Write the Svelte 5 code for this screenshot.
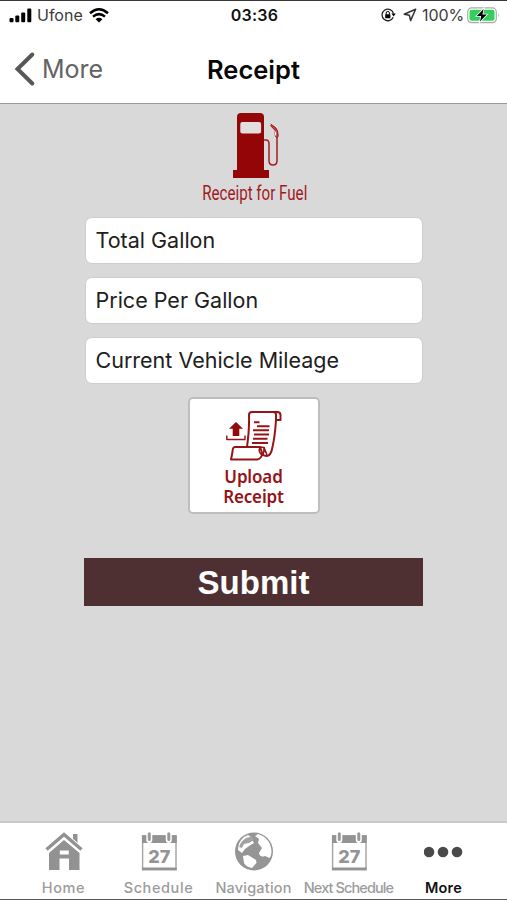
<script lang="ts">
	const fields = [
		{ name: 'gallons', label: 'Total Gallon' },
		{ name: 'price', label: 'Price Per Gallon' },
		{ name: 'mileage', label: 'Current Vehicle Mileage' }
	];

	const tabs = [
		{ id: 'home', label: 'Home', icon: 'home' },
		{ id: 'schedule', label: 'Schedule', icon: 'calendar' },
		{ id: 'navigation', label: 'Navigation', icon: 'globe' },
		{ id: 'next', label: 'Next Schedule', icon: 'calendar' },
		{ id: 'more', label: 'More', icon: 'dots' }
	];

	let active = $state('more');
</script>

<div class="screen">
	<div class="status">
		<div class="carrier">
			<svg width="24" height="15" viewBox="0 0 24 15">
				<rect x="0.5" y="10" width="4" height="4.2" rx="1" />
				<rect x="6.3" y="7.6" width="4" height="6.6" rx="1" />
				<rect x="12.2" y="4.4" width="4" height="9.8" rx="1" />
				<rect x="18.3" y="0.5" width="4" height="13.7" rx="1" />
			</svg>
			<span class="network">Ufone</span>
			<svg width="20" height="15" viewBox="0 0 20 15">
				<path d="M1 5.2Q10 -2.6 19 5.2M4 8.6Q10 3.7 16 8.6" fill="none" stroke="#000" stroke-width="2.5" />
				<path d="M6.6 11.2Q10 8.3 13.4 11.2L10 14.4Z" />
			</svg>
		</div>
		<span class="time">03:36</span>
		<div class="battery">
			<svg class="lock" width="15" height="14" viewBox="0 0 15 14">
				<path d="M12.2 9.2A5.8 5.8 0 1 1 12.5 5.5" fill="none" stroke="#222" stroke-width="1.3" />
				<path d="M10.4 5.5h4.4l-2.2 3z" />
				<rect x="4.2" y="6.3" width="5.2" height="4" rx=".5" />
				<path d="M5.2 6.5V5a1.6 1.6 0 0 1 3.2 0v1.5" fill="none" stroke="#000" />
			</svg>
			<svg class="arrow" width="14" height="14" viewBox="0 0 14 14">
				<path d="M12.6 1.3L1.2 6.3L6.4 7.3L7.6 12.6Z" fill="none" stroke="#333" stroke-width="1.5" stroke-linejoin="round" />
			</svg>
			<span class="percent">100%</span>
			<svg width="33" height="17" viewBox="0 0 33 17">
				<rect x=".7" y=".9" width="28.6" height="14.8" rx="4" fill="#fff" stroke="#aaa" stroke-width="1.2" />
				<rect x="2.5" y="2.8" width="25" height="11" rx="2" fill="#32cf5c" />
				<path d="M31 6q1.5 2.2 0 4.6z" fill="#999" />
				<path d="M16.6 2L9.8 9h4.4l-1.2 5.6L19.8 7.6h-4.4z" fill="#000" stroke="#fff" stroke-width="1.6" paint-order="stroke" />
			</svg>
		</div>
	</div>

	<header>
		<button class="back">
			<svg width="22" height="36" viewBox="0 0 22 36">
				<path d="M18.3 3.5L3.5 18L18.3 32.5" fill="none" stroke="#575757" stroke-width="4" stroke-linecap="round" />
			</svg>
			<span>More</span>
		</button>
		<h1>Receipt</h1>
	</header>

	<main>
		<svg class="pump" width="50" height="66" viewBox="0 0 50 66">
			<path fill="#940508" d="M5 57V4Q5 0 9 0H28Q32 0 32 4V57H37V65H1V57Z" />
			<rect x="8.3" y="9" width="20.8" height="11.5" rx="2" fill="#e1dede" />
			<path d="M32 27H34Q37 27 37 31V47.5Q37 52 41 52Q45 52 45 47.5V24" fill="none" stroke="#a31d20" stroke-width="1.5" />
			<path d="M38.8 11.2L43.5 14.5Q46.3 17 46.2 23.5Q44 26 43.2 22V17.5L38.5 12.6" fill="#c04b4d" stroke="#9c1215" />
			<path d="M43.6 18.5v4" stroke="#eee" stroke-width="1.2" />
		</svg>
		<h2>Receipt for Fuel</h2>

		<form>
			{#each fields as field}
				<input type="text" name={field.name} placeholder={field.label} />
			{/each}

			<button type="button" class="upload">
				<svg width="56" height="52" viewBox="0 0 56 52" fill="none" stroke="#941417" stroke-width="2" stroke-linejoin="round">
					<path d="M21 36Q23.5 18 23 4Q23 1 26 1H51Q54.5 1 54.5 4V9H50V4Q50 1 47.5 1M50 9Q49 25 46.5 36Q45 45 40.5 45Q36 45 35.5 40L34 36H9Q6.5 36 6.5 41L5 48.5H31Q34.5 48.5 36.5 43" />
					<path d="M34 36Q31.8 42 36.5 44Q38.5 41 38 36.5L34 36M38 36.5L41 44" stroke-width="1.6" />
					<path d="M28 11.2H33.5M31 15.2H43.5M27 19.3H43M28 23.5H43M27 27.8H41.5M26 32H42" />
					<path d="M10 11L17 17.7H13.3V25H6.7V17.7H3Z" fill="#940b0e" stroke="none" />
					<path d="M.8 24.5V28.5H19V24.5" stroke-width="1.4" />
				</svg>
				<span>Upload<br />Receipt</span>
			</button>

			<button type="button" class="submit">Submit</button>
		</form>
	</main>

	<nav>
		{#each tabs as tab}
			<button class={['tab', tab.id]} class:active={active === tab.id} onclick={() => (active = tab.id)}>
				{#if tab.icon === 'home'}
					<svg width="38" height="40" viewBox="0 0 38 40" fill="#929292">
						<path d="M28 3h4.5v11l-4.5-4z" />
						<path d="M4 22L19 9L34.5 22V39H24V27.5H14.5V39H4Z" />
						<path d="M14.8 19.5h9v4h-9z" fill="#fff" />
						<path d="M2 18.8L19 3.8L36 18.8" fill="none" stroke="#fff" stroke-width="6" />
						<path d="M1.5 18.5L19 3.5L36.5 18.5" fill="none" stroke="#929292" stroke-width="3.4" />
					</svg>
				{:else if tab.icon === 'calendar'}
					<svg width="38" height="40" viewBox="0 0 38 40">
						<rect x="2.6" y="5" width="33.4" height="33.6" fill="#fff" stroke="#a2a2a2" stroke-width="1.4" />
						<path d="M2 4.3H36.7V12H2ZM2 36.5H36.7V39.3H2Z" fill="#939393" />
						<path d="M9.3 1.5V9M28.8 1.5V9" stroke="#fff" stroke-width="6" stroke-linecap="round" />
						<path d="M9.3 2.7V8.5M28.8 2.7V8.5" stroke="#999" stroke-width="3" stroke-linecap="round" />
						<text x="19.3" y="31.5" text-anchor="middle">27</text>
					</svg>
				{:else if tab.icon === 'globe'}
					<svg width="40" height="40" viewBox="0 0 40 40">
						<circle cx="20" cy="20.5" r="19" fill="#959595" />
						<path d="M24 3Q36.5 7 37.5 20Q37.5 25 35.5 27L31 25Q26 27 25 22L28 17L24 12L25 8L21 5Z" fill="#fff" />
						<path d="M10 6L14 4L17 6L13 9L15 11L18 9L20 12L15 15L11 18L8 22L4 19Q4 11 10 6Z" fill="#fff" />
						<path d="M12 7L18 5.5L20 9L15 12L10 13L8 17L5 16Q7 10 12 7Z" fill="#a2a2a2" />
						<path d="M9 25L14 24L22 29L22.5 32L18 37Q12 36 10 32Z" fill="#fff" />
					</svg>
				{:else}
					<svg width="40" height="40" viewBox="0 0 40 40" fill="#4a4a4a">
						<circle cx="5" cy="21" r="5.3" />
						<circle cx="19" cy="21" r="5.3" />
						<circle cx="33" cy="21" r="5.3" />
					</svg>
				{/if}
				<span>{tab.label}</span>
			</button>
		{/each}
	</nav>
</div>

<style>
	:global(body) {
		background: #fff;
	}

	.screen {
		box-sizing: border-box;
		width: 507px;
		height: 900px;
		display: flex;
		flex-direction: column;
		border-top: 1px solid #39373a;
		border-bottom: 1px solid #59575a;
		background: #fff;
		font-family: Inter, "Liberation Sans", sans-serif;
		overflow: hidden;
	}

	button {
		border: 0;
		padding: 0;
		background: none;
		font-family: inherit;
		cursor: pointer;
	}

	svg {
		display: block;
		flex-shrink: 0;
	}

	.status {
		display: grid;
		grid-template-columns: 1fr auto 1fr;
		align-items: center;
		height: 28px;
		padding: 0 7px 0 9px;
		color: #3b3b3b;
		font-size: 16px;
	}

	.carrier,
	.battery {
		display: flex;
		align-items: center;
	}

	.network {
		width: 47px;
		margin: 0 5px 0 4px;
	}

	.time {
		color: #111;
		font-weight: 600;
		font-size: 16px;
		letter-spacing: 0.3px;
	}

	.battery {
		justify-content: flex-end;
	}

	.arrow {
		margin: 0 5px 0 7px;
	}

	.percent {
		margin-right: 3px;
		letter-spacing: -0.1px;
	}

	header {
		display: grid;
		grid-template-columns: 1fr auto 1fr;
		align-items: center;
		box-sizing: border-box;
		height: 75px;
		padding-top: 5px;
		border-bottom: 1px solid #9b9b9b;
	}

	.back {
		display: flex;
		align-items: center;
		gap: 6px;
		padding-left: 14px;
		color: #636363;
		font-size: 25px;
	}

	.back span,
	h1 {
		padding-top: 1px;
	}

	h1 {
		margin: 0;
		color: #080808;
		font-size: 25.5px;
		font-weight: 600;
	}

	main {
		flex: 1;
		display: flex;
		flex-direction: column;
		align-items: center;
		padding-top: 9px;
		background: #d9d9d9;
	}

	.pump {
		margin-left: 7px;
	}

	h2 {
		margin: 3px 0 0 2px;
		color: #a01b1e;
		font-family: Roboto, sans-serif;
		font-size: 19.5px;
		font-weight: 400;
		line-height: 24px;
		transform: scaleX(0.775);
	}

	form {
		display: flex;
		flex-direction: column;
		align-items: center;
		width: 338px;
		margin-top: 11px;
	}

	input {
		box-sizing: border-box;
		width: 338px;
		height: 47px;
		margin-bottom: 13px;
		padding: 0 10px 2px;
		border: 1px solid #cdcdcd;
		border-radius: 7px;
		background: #fff;
		font-family: inherit;
		font-size: 21.5px;
	}

	input::placeholder {
		color: #202020;
		opacity: 1;
	}

	.upload {
		display: flex;
		flex-direction: column;
		align-items: center;
		box-sizing: border-box;
		width: 132px;
		height: 117px;
		padding-top: 12px;
		border: 2px solid #bebebe;
		border-radius: 5px;
		background: #fff;
		color: #941417;
		font-family: "Noto Sans", sans-serif;
		font-size: 17px;
		font-weight: 600;
		line-height: 19.5px;
	}

	.upload span {
		margin-top: 4px;
		letter-spacing: -0.15px;
	}

	.submit {
		width: 339px;
		height: 48px;
		margin-top: 44px;
		padding-top: 1px;
		background: #4e3033;
		color: #fff;
		font-family: "Liberation Sans", sans-serif;
		font-size: 33px;
		font-weight: 700;
	}

	nav {
		display: grid;
		grid-template-columns: repeat(5, 95px);
		justify-content: center;
		height: 76px;
		border-top: 2px solid #c9c9c9;
	}

	.tab {
		display: flex;
		flex-direction: column;
		align-items: center;
		padding-top: 8px;
		color: #9c9c9c;
		font-size: 14.5px;
		font-weight: 500;
		line-height: 20px;
		letter-spacing: 0.2px;
		white-space: nowrap;
	}

	.tab span {
		margin-top: 7px;
	}

	.tab.home span,
	.tab.schedule span {
		letter-spacing: 0.6px;
	}

	.tab.next span {
		letter-spacing: -0.9px;
	}

	.tab.active {
		color: #111;
		font-weight: 600;
	}

	.tab text {
		fill: #949494;
		font-size: 18px;
		font-weight: 800;
		letter-spacing: 0;
	}
</style>
